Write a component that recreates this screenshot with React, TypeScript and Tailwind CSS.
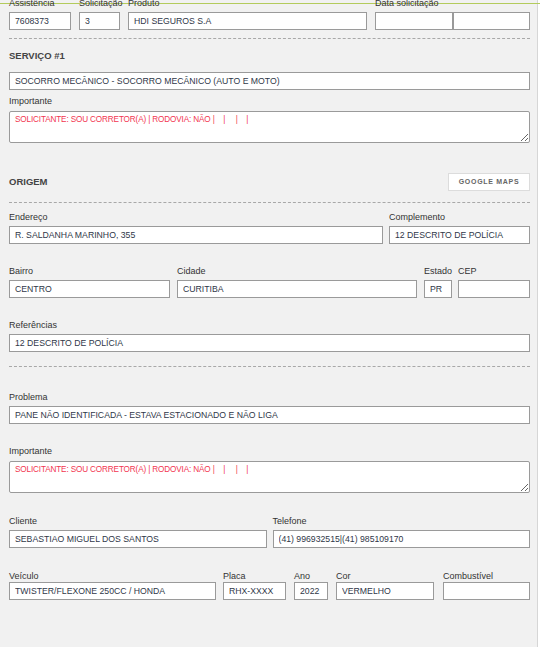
import React from "react";

const FONT = { fontFamily: '"Liberation Sans", Arial, sans-serif' };
const NARROW = { fontFamily: '"Liberation Sans Narrow", "Arial Narrow", sans-serif' };

function Label({ children, mb = "mb-[4px]" }: { children: React.ReactNode; mb?: string }) {
  return (
    <div className={`relative z-10 h-[10px] leading-[10px] text-[9px] text-[#333] whitespace-nowrap ${mb}`}>
      {children}
    </div>
  );
}

function Input({ value = "" }: { value?: string }) {
  return (
    <input
      readOnly
      value={value}
      className="block h-[18px] w-full border border-[#9a9a9a] bg-white px-[5px] text-[8.7px] text-[#2f3748] outline-none"
      style={NARROW}
    />
  );
}

function Field({
  label,
  value,
  className = "",
  mb,
}: {
  label: string;
  value?: string;
  className?: string;
  mb?: string;
}) {
  return (
    <div className={className}>
      <Label mb={mb}>{label}</Label>
      <Input value={value} />
    </div>
  );
}

function Note() {
  return (
    <textarea
      readOnly
      value={"SOLICITANTE: SOU CORRETOR(A) | RODOVIA: NÃO |    |     |    |"}
      className="block h-[32px] w-full rounded-[2px] border border-[#9a9a9a] bg-white px-[5px] pt-[3px] text-[8.2px] leading-[10px] tracking-[-0.15px] text-[#f23550] outline-none whitespace-pre"
      style={NARROW}
    />
  );
}

function Dashed({ mt }: { mt: string }) {
  return <div className={`${mt} border-t border-dashed border-[#a8a8a8]`} />;
}

export default function App() {
  return (
    <div className="relative min-h-[649px] overflow-hidden bg-white" style={FONT}>
      <div className="absolute left-0 right-0 top-[3px] h-px bg-[#b3cb5c]" />
      <div className="min-h-[649px] w-[538px] border-r border-[#d6d6d6] bg-[#f1f1f1] pl-[9px] pr-[7px] pb-[40px]">
        {/* Row 1 */}
        <div className="-mt-[2px] flex gap-[8px]">
          <Field className="w-[62px] shrink-0" label="Assistência" value="7608373" />
          <Field className="w-[41px] shrink-0" label="Solicitação" value="3" />
          <Field className="min-w-0 flex-1" label="Produto" value="HDI SEGUROS S.A" />
          <div className="w-[155px] shrink-0">
            <Label>Data solicitação</Label>
            <div className="flex">
              <div className="w-[78px]">
                <Input />
              </div>
              <div className="flex-1">
                <Input />
              </div>
            </div>
          </div>
        </div>

        <Dashed mt="mt-[8px]" />

        <div className="mt-[11px] h-[12px] leading-[12px] text-[9.5px] font-bold text-[#444]">SERVIÇO #1</div>
        <div className="mt-[10px]">
          <Input value="SOCORRO MECÂNICO - SOCORRO MECÂNICO (AUTO E MOTO)" />
        </div>
        <div className="mt-[6px]">
          <Label mb="mb-[5px]">Importante</Label>
          <Note />
        </div>

        <div className="mt-[30px] flex h-[18px] items-center justify-between">
          <div className="text-[9.5px] font-bold text-[#444]">ORIGEM</div>
          <div className="flex h-[18px] w-[82px] items-center justify-center border border-[#dcdcdc] bg-white text-[7px] font-bold tracking-[0.7px] text-[#666]">
            GOOGLE MAPS
          </div>
        </div>

        <Dashed mt="mt-[11px]" />

        <div className="mt-[9px] flex gap-[6px]">
          <Field className="min-w-0 flex-1" label="Endereço" value="R. SALDANHA MARINHO, 355" />
          <Field className="w-[141px] shrink-0" label="Complemento" value="12 DESCRITO DE POLÍCIA" />
        </div>

        <div className="mt-[22px] flex">
          <Field className="w-[161px] shrink-0" label="Bairro" value="CENTRO" />
          <Field className="ml-[7px] w-[240px] shrink-0" label="Cidade" value="CURITIBA" />
          <Field className="ml-[7px] w-[28px] shrink-0" label="Estado" value="PR" />
          <Field className="ml-[6px] min-w-0 flex-1" label="CEP" />
        </div>

        <div className="mt-[22px]">
          <Field label="Referências" value="12 DESCRITO DE POLÍCIA" />
        </div>

        <Dashed mt="mt-[14px]" />

        <div className="mt-[25px]">
          <Field label="Problema" value="PANE NÃO IDENTIFICADA - ESTAVA ESTACIONADO E NÃO LIGA" />
        </div>

        <div className="mt-[22px]">
          <Label mb="mb-[5px]">Importante</Label>
          <Note />
        </div>

        <div className="mt-[23px] grid grid-cols-2 gap-[6px]">
          <Field label="Cliente" value="SEBASTIAO MIGUEL DOS SANTOS" />
          <Field label="Telefone" value="(41) 996932515|(41) 985109170" />
        </div>

        <div className="mt-[23px] flex">
          <Field className="w-[207px] shrink-0" mb="mb-[1px]" label="Veículo" value="TWISTER/FLEXONE 250CC / HONDA" />
          <Field className="ml-[7px] w-[63px] shrink-0" mb="mb-[1px]" label="Placa" value="RHX-XXXX" />
          <Field className="ml-[8px] w-[34px] shrink-0" mb="mb-[1px]" label="Ano" value="2022" />
          <Field className="ml-[8px] w-[98px] shrink-0" mb="mb-[1px]" label="Cor" value="VERMELHO" />
          <Field className="ml-[9px] min-w-0 flex-1" mb="mb-[1px]" label="Combustível" />
        </div>
      </div>
    </div>
  );
}
